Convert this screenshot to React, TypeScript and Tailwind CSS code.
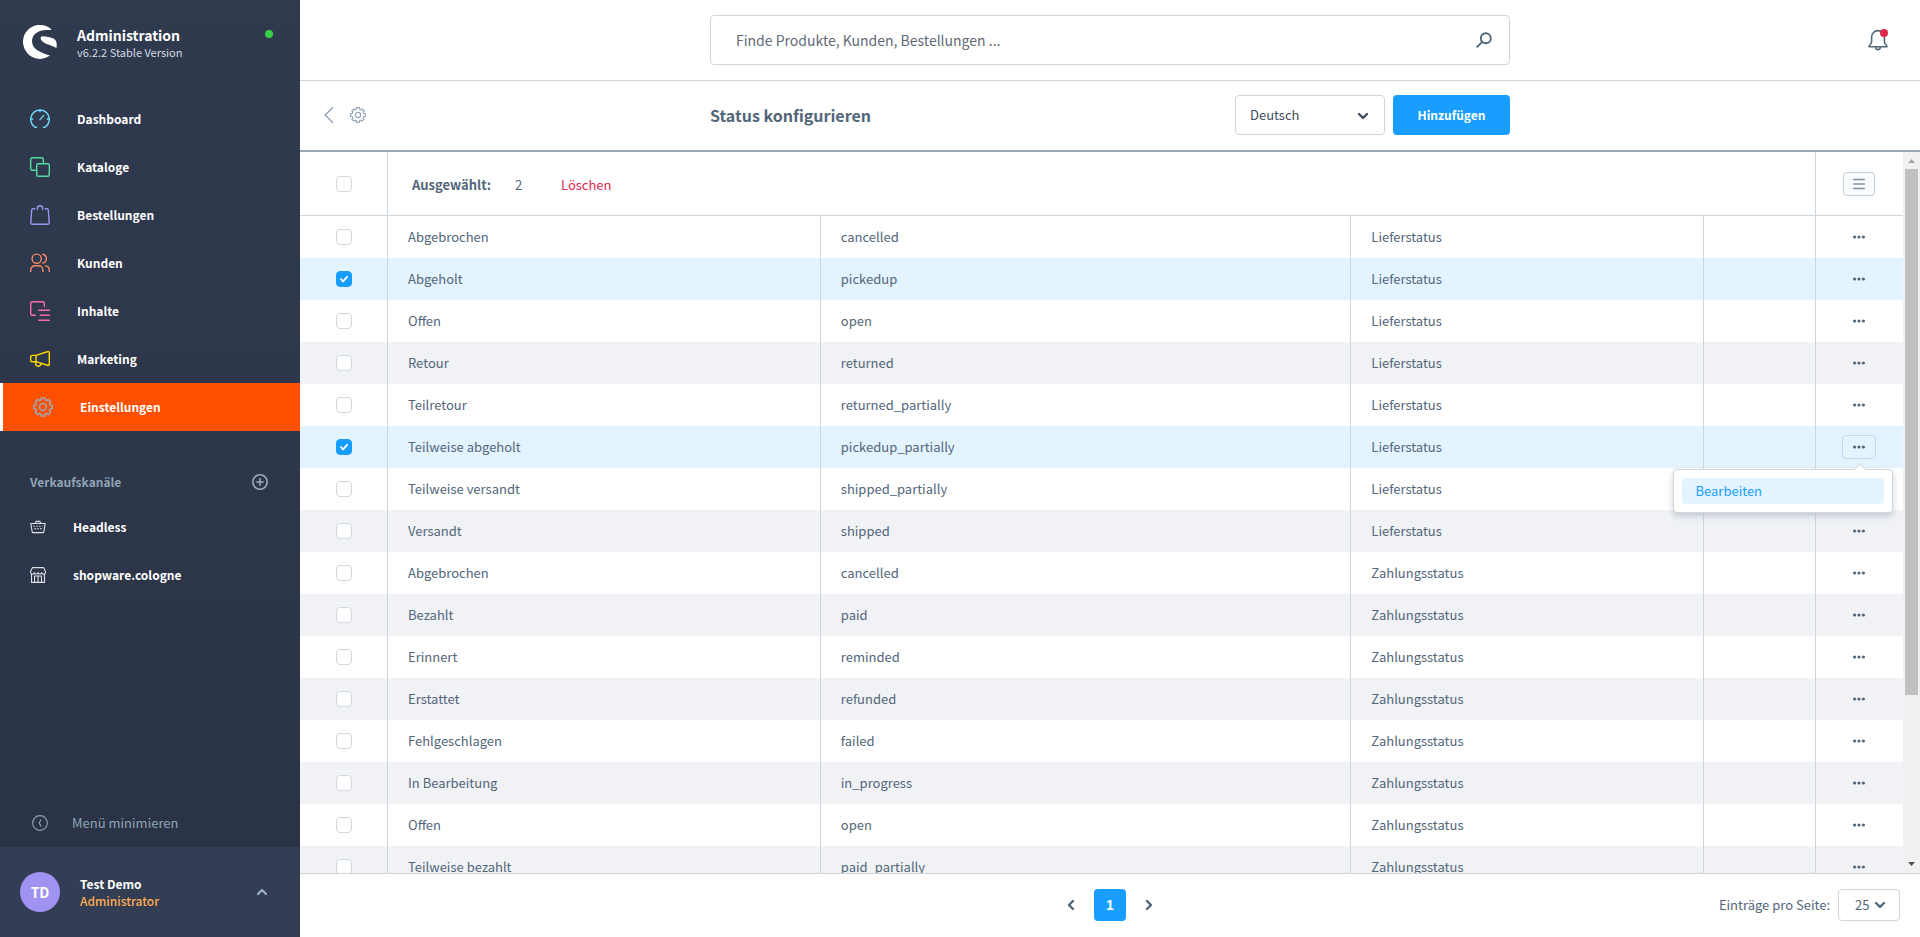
import { useState } from "react";
import type { ReactNode } from "react";
import clsx from "clsx";

type Row = { name: string; technical: string; type: string; selected?: boolean; menuOpen?: boolean };

const ROWS: Row[] = [
  { name: "Abgebrochen", technical: "cancelled", type: "Lieferstatus" },
  { name: "Abgeholt", technical: "pickedup", type: "Lieferstatus", selected: true },
  { name: "Offen", technical: "open", type: "Lieferstatus" },
  { name: "Retour", technical: "returned", type: "Lieferstatus" },
  { name: "Teilretour", technical: "returned_partially", type: "Lieferstatus" },
  { name: "Teilweise abgeholt", technical: "pickedup_partially", type: "Lieferstatus", selected: true, menuOpen: true },
  { name: "Teilweise versandt", technical: "shipped_partially", type: "Lieferstatus" },
  { name: "Versandt", technical: "shipped", type: "Lieferstatus" },
  { name: "Abgebrochen", technical: "cancelled", type: "Zahlungsstatus" },
  { name: "Bezahlt", technical: "paid", type: "Zahlungsstatus" },
  { name: "Erinnert", technical: "reminded", type: "Zahlungsstatus" },
  { name: "Erstattet", technical: "refunded", type: "Zahlungsstatus" },
  { name: "Fehlgeschlagen", technical: "failed", type: "Zahlungsstatus" },
  { name: "In Bearbeitung", technical: "in_progress", type: "Zahlungsstatus" },
  { name: "Offen", technical: "open", type: "Zahlungsstatus" },
  { name: "Teilweise bezahlt", technical: "paid_partially", type: "Zahlungsstatus" },
];

// Outline of a cog with eight teeth, centred in a 20x20 box
const gearPath = () => {
  const points: string[] = [];
  for (let i = 0; i < 8; i++) {
    const mid = (i * Math.PI) / 4 - Math.PI / 2;
    [[-0.26, 7.4], [-0.2, 9.3], [0.2, 9.3], [0.26, 7.4]].forEach(([offset, radius]) => {
      const x = 10 + radius * Math.cos(mid + offset);
      const y = 10 + radius * Math.sin(mid + offset);
      points.push(`${x.toFixed(2)} ${y.toFixed(2)}`);
    });
  }
  return `M${points.join("L")}Z`;
};

const GearIcon = ({ className }: { className?: string }) => (
  <svg viewBox="0 0 20 20" className={className} fill="none" stroke="currentColor" strokeWidth="1.5" strokeLinejoin="round">
    <path d={gearPath()} />
    <circle cx="10" cy="10" r="3.4" />
  </svg>
);

const LineIcon = ({ className, children }: { className?: string; children: ReactNode }) => (
  <svg
    viewBox="0 0 20 20"
    className={clsx("shrink-0", className)}
    fill="none"
    stroke="currentColor"
    strokeWidth="1.4"
    strokeLinecap="round"
    strokeLinejoin="round">
    {children}
  </svg>
);

const Chevron = ({ className }: { className?: string }) => (
  <svg viewBox="0 0 12 12" className={className} fill="none" stroke="currentColor" strokeWidth="2.4" strokeLinecap="round" strokeLinejoin="round">
    <path d="M2 4l4 4 4-4" />
  </svg>
);

const NAV: { label: string; icon: ReactNode; active?: boolean }[] = [
  {
    label: "Dashboard",
    icon: (
      <LineIcon className="size-5 text-[#6ed5f0]">
        <path d="M6.5 18.3H5.2A9.3 9.3 0 1 1 14.8 18.3H13.5M10 .8v2M.8 10h2M17.2 10h2M10 10.6l3.6-4" />
      </LineIcon>
    ),
  },
  {
    label: "Kataloge",
    icon: (
      <LineIcon className="size-5 text-[#57d9a3]">
        <rect x="6.7" y="6.7" width="12.6" height="12.6" rx="1.5" />
        <path d="M6.5 13.3H2.2A1.5 1.5 0 0 1 .7 11.8V2.2A1.5 1.5 0 0 1 2.2.7h9.6a1.5 1.5 0 0 1 1.5 1.5v4.3" />
      </LineIcon>
    ),
  },
  {
    label: "Bestellungen",
    icon: (
      <LineIcon className="size-5 text-[#a092f0]">
        <path d="M4.7 3.7H3A1.3 1.3 0 0 0 1.7 4.9L.8 17.9a1.3 1.3 0 0 0 1.3 1.4h15.8a1.3 1.3 0 0 0 1.3-1.4l-.9-13A1.3 1.3 0 0 0 17 3.7h-1.7M7.3 4.6V3.4a2.7 2.7 0 0 1 5.4 0v1.2" />
      </LineIcon>
    ),
  },
  {
    label: "Kunden",
    icon: (
      <LineIcon className="size-5 text-[#f88962]">
        <circle cx="6.7" cy="5.7" r="4.6" />
        <path d="M.8 18.6v-1.8a4 4 0 0 1 4-4h4a4 4 0 0 1 4 4v1.8M12.8 1.3a4.5 4.5 0 0 1 0 8.8M15.4 12.9a4 4 0 0 1 3.8 4v1.7" />
      </LineIcon>
    ),
  },
  {
    label: "Inhalte",
    icon: (
      <LineIcon className="size-5 text-[#ff68b4]">
        <path d="M5.4 14.3H2.2a1.5 1.5 0 0 1-1.5-1.5V2.2A1.5 1.5 0 0 1 2.2.7h10.6a1.5 1.5 0 0 1 1.5 1.5v3.4M8.8 9.3h10.5M10.3 14.3h9M8.8 19.3h10.5" />
      </LineIcon>
    ),
  },
  {
    label: "Marketing",
    icon: (
      <LineIcon className="size-5 text-[#ffd700]">
        <path d="M6 6.4l12.2-3.9a.9.9 0 0 1 1.1.9v12.2a.9.9 0 0 1-1.1.9L6 12.7M6 6.4H2A1.3 1.3 0 0 0 .7 7.7v3.7A1.3 1.3 0 0 0 2 12.7h4zM5.7 12.9v1.5a2.6 2.6 0 0 0 5.2.4" />
      </LineIcon>
    ),
  },
  { label: "Einstellungen", icon: <GearIcon className="size-5 shrink-0 text-[#9aa8b5]" />, active: true },
];

const Sidebar = () => (
  <aside className="flex w-[300px] shrink-0 flex-col bg-linear-to-b from-[#303a4f] to-[#2a3345] text-[12px] text-white">
    <header className="flex h-[95px] items-start gap-5 pt-6 pr-[27px] pl-[23px]">
      <svg viewBox="0 0 34 34" className="mt-px size-[34px] shrink-0" fill="#fff">
        <path d="M28.6 4.5A17 17 0 1 0 27 30.6C17.5 27.3 9 24.5 9 16.2 9 9.2 15.5 5 23 5c2.2 0 4.2.2 5.6-.5z" />
        <path d="M33.4 22.9c1.2-5-.6-8.900-3.600-9.700-3-.9-7.300-2-9.800-1.900-2 .1-2.700 1.200-2.300 2.600 1.400 4.600 9.400 5.500 15.700 9z" />
      </svg>
      <div className="flex-1">
        <div className="text-[14px] leading-[22px] font-semibold">Administration</div>
        <div className="text-[11px] leading-3 text-[#d1d9e0]">v6.2.2 Stable Version</div>
      </div>
      <span className="mt-1.5 size-2 rounded-full bg-[#37d046]" />
    </header>

    <nav aria-label="Hauptmenü">
      {NAV.map((item) => (
        <a
          key={item.label}
          href="#"
          className={clsx(
            "flex h-12 items-center gap-[27px] pl-[30px] font-semibold",
            item.active && "border-l-3 border-white bg-[#ff4f00]"
          )}>
          {item.icon}
          {item.label}
        </a>
      ))}
    </nav>

    <div className="flex items-center justify-between pt-[39px] pr-8 pb-[13px] pl-[30px]">
      <h2 className="leading-6 font-semibold text-[#8ea3b5]">Verkaufskanäle</h2>
      <button type="button" aria-label="Verkaufskanal hinzufügen" className="text-[#9aacbb]">
        <LineIcon className="size-4">
          <circle cx="10" cy="10" r="9" strokeWidth="2" />
          <path d="M10 6v8M6 10h8" strokeWidth="2" />
        </LineIcon>
      </button>
    </div>
    <nav aria-label="Verkaufskanäle">
      <a href="#" className="flex h-10 items-center gap-[27px] pl-[30px] font-semibold">
        <svg viewBox="0 0 16 16" className="size-4 text-[#dde3e9]" fill="none" stroke="currentColor" strokeWidth="1.1" strokeLinejoin="round">
          <path d="M.8 4.500h14.400l-1.400 8.300a1 1 0 0 1-1 .8H3.200a1 1 0 0 1-1-.8zM5.200 4.300L6.300 2.400h3.400l1.100 1.900" />
          <path d="M3.500 7.200h9M4.500 9.600h7" strokeDasharray="1.4 1.4" />
        </svg>
        Headless
      </a>
      <a href="#" className="flex h-14 items-center gap-[27px] pl-[30px] font-semibold">
        <svg viewBox="0 0 16 16" className="size-4 text-[#dde3e9]" fill="none" stroke="currentColor" strokeWidth="1.1" strokeLinejoin="round">
          <path d="M1.500 6.600v8.800h13V6.600M2.500.6h11l1.900 3.600v.9a1.800 1.800 0 0 1-3.700.5 1.900 1.900 0 0 1-3.700 0 1.900 1.900 0 0 1-3.700 0 1.800 1.800 0 0 1-3.700-.5v-.9z" />
          <path d="M4.500 15.400V9h7v6.400M8 9v6.400" />
        </svg>
        shopware.cologne
      </a>
    </nav>

    <button type="button" className="mt-auto flex h-12 items-center gap-6 pl-8 text-[13px] text-[#8ea3b5]">
      <LineIcon className="size-4">
        <circle cx="10" cy="10" r="9.2" />
        <path d="M11.200 6L9 10l2.200 4" />
      </LineIcon>
      Menü minimieren
    </button>
    <button type="button" className="flex h-[90px] items-center gap-5 bg-[#333d54] pr-8 pl-5 text-left font-semibold">
      <span className="grid size-10 place-items-center rounded-full bg-[#a092f0] text-[14px]">TD</span>
      <span className="flex-1 leading-[17px]">
        Test Demo
        <span className="block font-medium text-[#ffab52]">Administrator</span>
      </span>
      <Chevron className="size-3 rotate-180 text-[#9aacbb]" />
    </button>
  </aside>
);

const Checkbox = ({ label, checked, onChange }: { label: string; checked: boolean; onChange: () => void }) => (
  <div className="relative mx-auto size-4">
    <input
      type="checkbox"
      aria-label={label}
      checked={checked}
      onChange={onChange}
      className="block size-4 appearance-none rounded-[4px] border border-[#d1d9e0] bg-white checked:border-[#189eff] checked:bg-[#189eff]"
    />
    {checked && (
      <svg viewBox="0 0 16 16" className="pointer-events-none absolute inset-0 size-4" fill="none" stroke="#fff" strokeWidth="1.8" strokeLinecap="round" strokeLinejoin="round">
        <path d="M5 8.200l2.100 2.100 4-4.400" />
      </svg>
    )}
  </div>
);

const Dots = () => (
  <svg viewBox="0 0 12 4" className="h-1 w-3" fill="#52667a">
    <circle cx="1.6" cy="2" r="1.6" />
    <circle cx="6" cy="2" r="1.6" />
    <circle cx="10.4" cy="2" r="1.6" />
  </svg>
);

const ContextMenu = () => (
  <div className="absolute top-[34px] right-[-17px] z-10 w-[220px] rounded-[4px] border border-[#d1d9e0] bg-white p-2 shadow-[0_3px_6px_rgba(120,138,155,0.4)]">
    <span className="absolute top-[-5px] right-7 size-2 rotate-45 border-t border-l border-[#d1d9e0] bg-white" />
    <button type="button" className="block h-[26px] w-full rounded-[4px] bg-[#e3f3ff] pl-[14px] text-left text-[#189eff]">
      Bearbeiten
    </button>
  </div>
);

const DataGrid = () => {
  const [selected, setSelected] = useState(() => ROWS.map((row) => !!row.selected));
  const count = selected.filter(Boolean).length;
  const toggle = (index: number) => setSelected((prev) => prev.map((value, i) => (i === index ? !value : value)));
  const toggleAll = () => setSelected((prev) => prev.map(() => count < prev.length));

  return (
    <table className="w-full table-fixed border-separate border-spacing-0 text-left">
      <colgroup>
        <col className="w-[88px]" />
        <col className="w-[27%]" />
        <col />
        <col className="w-[22%]" />
        <col className="w-[112px]" />
        <col className="w-[87px]" />
      </colgroup>
      <thead>
        <tr className="h-16">
          <th className="border-r border-b border-[#cdd6dd]">
            <Checkbox label="Alle auswählen" checked={count === ROWS.length} onChange={toggleAll} />
          </th>
          <th colSpan={4} className="border-r border-b border-[#cdd6dd] pt-0.5 pl-6 font-normal">
            <div className="flex items-center">
              <span className="w-[103px] font-bold">Ausgewählt:</span>
              <span className="w-[46px]">{count}</span>
              <button type="button" className="text-[#de294c]">Löschen</button>
            </div>
          </th>
          <th className="border-b border-[#cdd6dd] pr-0.5">
            <button type="button" aria-label="Einstellungen der Liste" className="mx-auto grid h-6 w-8 place-items-center rounded-[4px] border border-[#c3cfdb] bg-[#f9fafb]">
              <svg viewBox="0 0 12 12" className="size-3" stroke="#7d91a5" strokeWidth="1.5" strokeLinecap="round">
                <path d="M.7 1.500h10.600M.7 6h10.600M.7 10.500h10.600" />
              </svg>
            </button>
          </th>
        </tr>
      </thead>
      <tbody>
        {ROWS.map((row, index) => (
          <tr key={index} className={clsx("h-[42px]", selected[index] ? "bg-[#e3f3ff]" : index % 2 === 1 ? "bg-[#f0f2f5]" : "bg-white")}>
            <td className="border-r border-[#cdd6dd]">
              <Checkbox label={row.name} checked={selected[index]} onChange={() => toggle(index)} />
            </td>
            <td className="border-r border-[#cdd6dd] pl-5">{row.name}</td>
            <td className="border-r border-[#cdd6dd] pl-5">{row.technical}</td>
            <td className="border-r border-[#cdd6dd] pl-5">{row.type}</td>
            <td className="border-r border-[#cdd6dd]" />
            <td className="pr-0.5">
              <div className="relative mx-auto w-[34px]">
                <button
                  type="button"
                  aria-label={`Aktionen für ${row.name}`}
                  className={clsx("grid h-6 w-full place-items-center rounded-[4px] border", row.menuOpen ? "border-[#cdd6dd]" : "border-transparent")}>
                  <Dots />
                </button>
                {row.menuOpen && <ContextMenu />}
              </div>
            </td>
          </tr>
        ))}
      </tbody>
    </table>
  );
};

const ScrollTrack = () => (
  <div aria-hidden="true" className="flex w-[17px] shrink-0 flex-col items-center bg-[#f1f1f1]">
    <svg viewBox="0 0 17 17" className="size-[17px] shrink-0" fill="#a3a3a3">
      <path d="M5 11h7L8.500 7z" />
    </svg>
    <div className="h-[73%] w-[13px] bg-[#c1c1c1]" />
    <svg viewBox="0 0 17 17" className="mt-auto size-[17px] shrink-0" fill="#505050">
      <path d="M5 6h7l-3.500 4z" />
    </svg>
  </div>
);

const App = () => {
  return (
    <div className='flex h-screen overflow-hidden bg-white font-["Noto_Sans_CJK_SC","Open_Sans",sans-serif] text-[13px] leading-5 text-[#52667a]'>
      <Sidebar />

      <main className="flex min-w-0 flex-1 flex-col">
        {/* Search */}
        <div className="grid h-[81px] shrink-0 grid-cols-[1fr_minmax(0,800px)_1fr] items-center border-b border-[#cdd6dd]">
          <div className="col-start-2 flex h-[50px] items-center rounded-[4px] border border-[#cdd6dd] pr-[17px] pl-[25px]">
            <input
              type="search"
              aria-label="Suche"
              placeholder="Finde Produkte, Kunden, Bestellungen ..."
              className="min-w-0 flex-1 text-[14px] outline-none placeholder:text-[#5f6b77]"
            />
            <svg viewBox="0 0 16 16" className="size-4" fill="none" stroke="#52667a" strokeWidth="1.9" strokeLinecap="round">
              <circle cx="9.8" cy="6.2" r="5" />
              <path d="M6.200 9.800L1.200 14.800" />
            </svg>
          </div>
          <button type="button" aria-label="Benachrichtigungen" className="relative mr-8 justify-self-end">
            <svg viewBox="0 0 20 22" className="h-[22px] w-5" fill="none" stroke="#52667a" strokeWidth="1.6" strokeLinejoin="round">
              <path d="M1 17.800c0-2 2.600-2.300 2.600-5V8a6.400 6.400 0 0 1 12.800 0v4.800c0 2.700 2.600 3 2.600 5zM7.700 18.300a2.300 2.300 0 0 0 4.600 0" />
            </svg>
            <span className="absolute top-0 right-0 size-2 rounded-full bg-[#de294c]" />
          </button>
        </div>

        {/* Page bar */}
        <div className="grid h-[71px] shrink-0 grid-cols-[1fr_minmax(0,800px)_1fr] items-center border-b-2 border-[#98a7b3] pb-0.5">
          <a href="#" aria-label="Zurück zu den Einstellungen" className="flex items-center gap-4 pl-6 text-[#94a6b8]">
            <svg viewBox="0 0 10 16" className="h-4 w-[10px]" fill="none" stroke="currentColor" strokeWidth="1.5" strokeLinecap="round" strokeLinejoin="round">
              <path d="M8.500.8L1.200 8l7.300 7.200" />
            </svg>
            <GearIcon className="size-4" />
          </a>
          <div className="flex items-center gap-2">
            <h1 className="flex-1 text-[16px] font-semibold">Status konfigurieren</h1>
            <div className="relative w-[150px] text-[#3d4b5c]">
              <select aria-label="Sprache" className="h-10 w-full appearance-none rounded-[4px] border border-[#cdd6dd] bg-white pl-[14px]">
                <option>Deutsch</option>
              </select>
              <Chevron className="pointer-events-none absolute top-[15px] right-4 size-3" />
            </div>
            <button type="button" className="h-10 w-[117px] rounded-[4px] bg-[#189eff] text-[12px] font-bold text-white">
              Hinzufügen
            </button>
          </div>
        </div>

        {/* Listing */}
        <div className="flex min-h-0 flex-1">
          <div className="min-w-0 flex-1 overflow-hidden">
            <DataGrid />
          </div>
          <ScrollTrack />
        </div>

        {/* Pagination */}
        <footer className="grid h-16 shrink-0 grid-cols-[1fr_auto_1fr] items-center border-t border-[#cdd6dd] pb-0.5">
          <nav aria-label="Seiten" className="col-start-2 flex items-center gap-[13px]">
            <button type="button" aria-label="Vorherige Seite" className="p-1">
              <Chevron className="size-3 rotate-90" />
            </button>
            <button
              type="button"
              aria-current="page"
              className='h-8 w-8 rounded-[4px] bg-[#189eff] font-["Liberation_Sans",sans-serif] text-[14px] font-bold text-white'>
              1
            </button>
            <button type="button" aria-label="Nächste Seite" className="p-1">
              <Chevron className="size-3 -rotate-90" />
            </button>
          </nav>
          <label className="flex items-center gap-2 justify-self-end pr-5">
            Einträge pro Seite:
            <span className="relative">
              <select className="h-8 w-[62px] appearance-none rounded-[4px] border border-[#cdd6dd] bg-white pl-4">
                <option>25</option>
              </select>
              <Chevron className="pointer-events-none absolute top-[10px] right-[14px] size-3" />
            </span>
          </label>
        </footer>
      </main>
    </div>
  );
};

export default App;
